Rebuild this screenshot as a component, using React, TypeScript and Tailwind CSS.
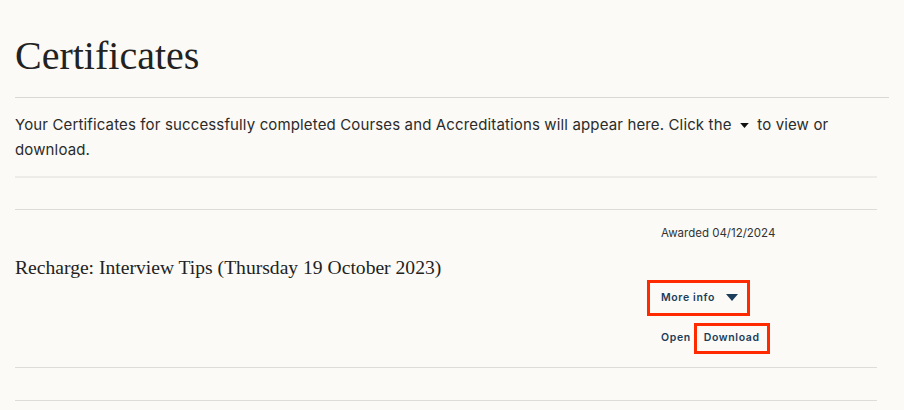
import { Fragment } from "react";

const sans = "font-['Inter','Open_Sans',sans-serif]";
const serif = "font-['Liberation_Serif','Times_New_Roman',serif]";

const Caret = ({ className }: { className?: string }) => (
  <svg viewBox="0 0 12 7" className={className} fill="currentColor" aria-hidden="true">
    <path d="M0 0h12L6 7z" />
  </svg>
);

interface Certificate {
  id: string;
  title: string;
  awarded: string;
}

const certificates: Certificate[] = [
  { id: "c1", title: "Recharge: Interview Tips (Thursday 19 October 2023)", awarded: "04/12/2024" },
];

const CertificateRow = ({ cert }: { cert: Certificate }) => (
  <div className="flex border-b border-[#dedcd8] h-[158px]">
    <div className="flex-1 pt-[48px]">
      <h2 className={`${serif} text-[19.6px] leading-[20px] text-[#222]`}>{cert.title}</h2>
    </div>
    <div className="w-[216px] pt-[18px]">
      <p className={`${sans} text-[11.5px] text-[#333] leading-none`}>Awarded {cert.awarded}</p>
      {/* More info */}
      <button
        className={`${sans} mt-[40px] -ml-[14px] flex items-center gap-[11px] border-[3px] border-[#ff2a00] pl-[11px] pr-[9px] h-[36px] text-[10.5px] font-semibold tracking-[0.06em] text-[#1c3d5a]`}
      >
        More info
        <Caret className="w-[12px] h-[7px]" />
      </button>
      <div className={`${sans} mt-[7px] flex items-center text-[10.5px] font-semibold tracking-[0.06em] text-[#1c3d5a]`}>
        <span>Open</span>
        <span className="ml-[3px] border-[3px] border-[#ff2a00] h-[31px] px-[7px] flex items-center">Download</span>
      </div>
    </div>
  </div>
);

export default function App() {
  return (
    <div className="min-h-screen bg-[#fbfaf6] pl-[15px] pr-[15px]">
      <h1 className={`${serif} text-[40px] leading-none text-[#222] pt-[36px] pb-[21px] border-b border-[#d9d8d4] font-normal`}>
        Certificates
      </h1>
      <div className="w-[862px]">
        <p className={`${sans} text-[15px] tracking-[0.14px] leading-[25px] text-[#2b2b2b] pt-[14px] pb-[14px] border-b-2 border-[#eeece8]`}>
          Your Certificates for successfully completed Courses and Accreditations will appear here. Click the{" "}
          <Caret className="inline-block w-[9px] h-[5px] mx-[4px] align-middle text-[#111]" /> to view or download.
        </p>
        <div className="h-[32px] border-b border-[#dedcd8]" />
        {certificates.map((c) => (
          <Fragment key={c.id}>
            <CertificateRow cert={c} />
          </Fragment>
        ))}
        <div className="h-[33px] border-b border-[#dedcd8]" />
      </div>
    </div>
  );
}
